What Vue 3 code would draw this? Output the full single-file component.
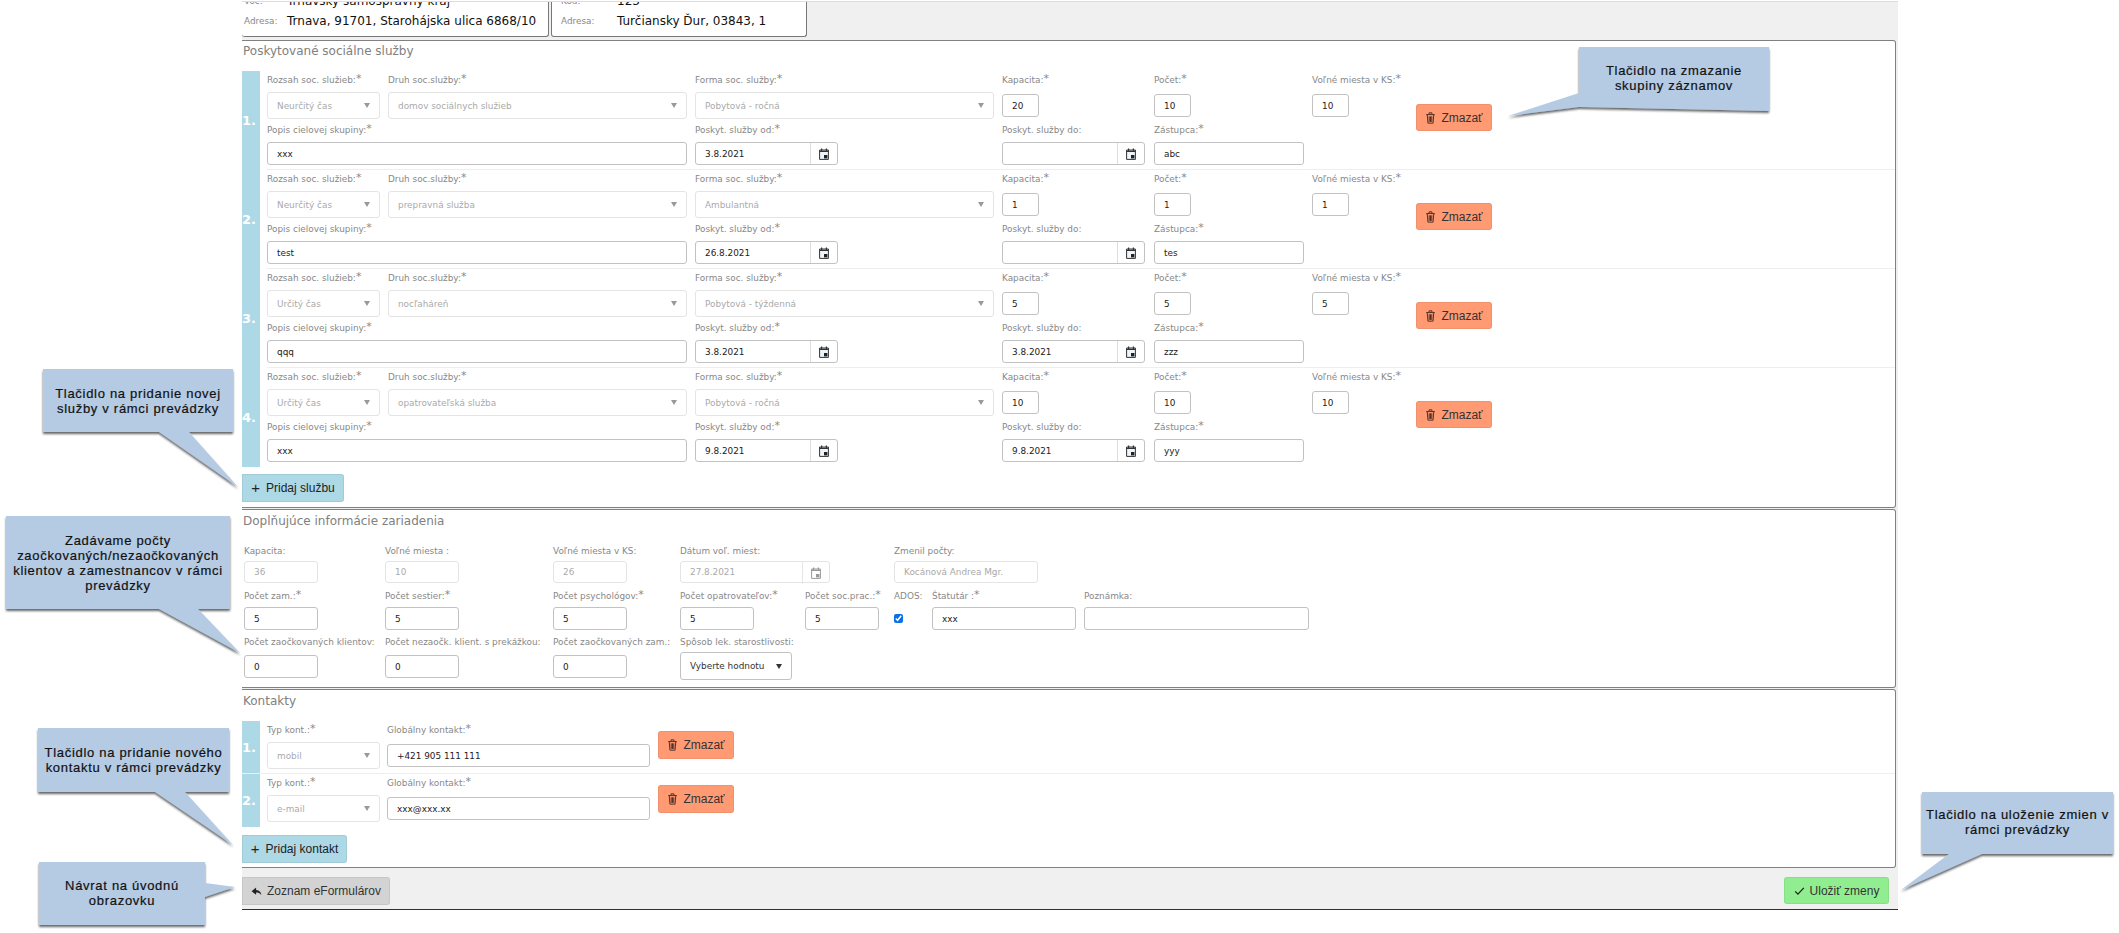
<script setup>
const services = [
  { n: '1.', rozsah: 'Neurčitý čas', druh: 'domov sociálnych služieb', forma: 'Pobytová - ročná', kap: '20', poc: '10', vol: '10', popis: 'xxx', od: '3.8.2021', do: '', zast: 'abc' },
  { n: '2.', rozsah: 'Neurčitý čas', druh: 'prepravná služba', forma: 'Ambulantná', kap: '1', poc: '1', vol: '1', popis: 'test', od: '26.8.2021', do: '', zast: 'tes' },
  { n: '3.', rozsah: 'Určitý čas', druh: 'nocľaháreň', forma: 'Pobytová - týždenná', kap: '5', poc: '5', vol: '5', popis: 'qqq', od: '3.8.2021', do: '3.8.2021', zast: 'zzz' },
  { n: '4.', rozsah: 'Určitý čas', druh: 'opatrovateľská služba', forma: 'Pobytová - ročná', kap: '10', poc: '10', vol: '10', popis: 'xxx', od: '9.8.2021', do: '9.8.2021', zast: 'yyy' }
]
const contacts = [
  { n: '1.', typ: 'mobil', val: '+421 905 111 111' },
  { n: '2.', typ: 'e-mail', val: 'xxx@xxx.xx' }
]
const callouts = [
  { id: 'a', x: 1579, y: 47, w: 190, h: 64, pts: '1579,47 1769,47 1769,111 1579,107 1508,116 1579,93', lines: ['Tlačidlo na zmazanie', 'skupiny záznamov'], top: 16 },
  { id: 'b', x: 43, y: 369, w: 190, h: 63, pts: '43,369 233,369 233,432 189,432 238,487 159,432 43,432', lines: ['Tlačidlo na pridanie novej', 'služby v rámci prevádzky'], top: 17 },
  { id: 'c', x: 6, y: 516, w: 224, h: 93, pts: '6,516 230,516 230,609 198,609 240,653 159,609 6,609', lines: ['Zadávame počty', 'zaočkovaných/nezaočkovaných', 'klientov a zamestnancov v rámci', 'prevádzky'], top: 17 },
  { id: 'd', x: 38, y: 728, w: 191, h: 64, pts: '38,728 229,728 229,792 185,792 233,845 155,792 38,792', lines: ['Tlačidlo na pridanie nového', 'kontaktu v rámci prevádzky'], top: 17 },
  { id: 'e', x: 39, y: 862, w: 166, h: 63, pts: '39,862 205,862 205,883 235,887 205,897 205,925 39,925', lines: ['Návrat na úvodnú', 'obrazovku'], top: 16 },
  { id: 'f', x: 1922, y: 792, w: 191, h: 62, pts: '1922,792 2113,792 2113,854 1982,854 1901,890 1949,854 1922,854', lines: ['Tlačidlo na uloženie zmien v', 'rámci prevádzky'], top: 15 }
]
</script>

<template>
  <div class="page">
    <main class="main">
      <header class="top">
        <div class="card card1">
          <div class="crow"><span class="clabel">Voč:</span><span class="cval">Trnavský samosprávny kraj</span></div>
          <div class="crow"><span class="clabel">Adresa:</span><span class="cval">Trnava, 91701, Starohájska ulica 6868/10</span></div>
        </div>
        <div class="card card2">
          <div class="crow"><span class="clabel">Kód:</span><span class="cval">123</span></div>
          <div class="crow"><span class="clabel">Adresa:</span><span class="cval">Turčiansky Ďur, 03843, 1</span></div>
        </div>
      </header>

      <section class="box box1">
        <h2 class="title head1">Poskytované sociálne služby</h2>
        <div v-for="s in services" :key="s.n" class="srow">
          <div class="strip">{{ s.n }}</div>
          <div class="sgrid">
            <div class="f"><label class="l1">Rozsah soc. služieb:<i>*</i></label><div class="sel"><span>{{ s.rozsah }}</span><b class="caret"></b></div></div>
            <div class="f"><label class="l1">Druh soc.služby:<i>*</i></label><div class="sel"><span>{{ s.druh }}</span><b class="caret"></b></div></div>
            <div class="f"><label class="l1">Forma soc. služby:<i>*</i></label><div class="sel"><span>{{ s.forma }}</span><b class="caret"></b></div></div>
            <div class="f"><label class="l1">Kapacita:<i>*</i></label><div class="inp narrow up">{{ s.kap }}</div></div>
            <div class="f"><label class="l1">Počet:<i>*</i></label><div class="inp narrow up">{{ s.poc }}</div></div>
            <div class="f"><label class="l1">Voľné miesta v KS:<i>*</i></label><div class="inp narrow up">{{ s.vol }}</div></div>
            <button class="btn del delsvc" type="button">
              <svg class="ic" viewBox="0 0 12 14"><path d="M4.3 2.5V1h3.4v1.5M1 3h10M2.2 3.2 3 13h6l.8-9.8M4.5 5v6.6M6 5v6.6M7.5 5v6.6" fill="none" stroke="#4a2c22" stroke-width="1.1"/></svg>Zmazať
            </button>
            <div class="f span2"><label class="l2">Popis cielovej skupiny:<i>*</i></label><div class="inp">{{ s.popis }}</div></div>
            <div class="f"><label class="l2">Poskyt. služby od:<i>*</i></label>
              <div class="inp date"><span class="dv">{{ s.od }}</span><span class="addon"><svg class="cal" viewBox="0 0 10 12"><path d="M.6 2h8.8v9.4H.6z" fill="#eef5fa" stroke="#333" stroke-width="1"/><path d="M.6 3.4h8.8M2.6 .4v2.6M7.4 .4v2.6" fill="none" stroke="#333" stroke-width="1.2"/><rect x="5" y="7" width="3.4" height="3.4" fill="#222"/></svg></span></div>
            </div>
            <div class="f"><label class="l2">Poskyt. služby do:</label>
              <div class="inp date"><span class="dv">{{ s.do }}</span><span class="addon"><svg class="cal" viewBox="0 0 10 12"><path d="M.6 2h8.8v9.4H.6z" fill="#eef5fa" stroke="#333" stroke-width="1"/><path d="M.6 3.4h8.8M2.6 .4v2.6M7.4 .4v2.6" fill="none" stroke="#333" stroke-width="1.2"/><rect x="5" y="7" width="3.4" height="3.4" fill="#222"/></svg></span></div>
            </div>
            <div class="f"><label class="l2">Zástupca:<i>*</i></label><div class="inp zast">{{ s.zast }}</div></div>
          </div>
        </div>
        <button class="btn add addsvc" type="button"><span class="plus">+</span>Pridaj službu</button>
      </section>

      <section class="box box2">
        <h2 class="title head2">Doplňujúce informácie zariadenia</h2>
        <div class="igrid">
          <div class="g"><label class="g1">Kapacita:</label><div class="inp off w74">36</div></div>
          <div class="g"><label class="g1">Voľné miesta :</label><div class="inp off w74">10</div></div>
          <div class="g"><label class="g1">Voľné miesta v KS:</label><div class="inp off w74">26</div></div>
          <div class="g s2"><label class="g1">Dátum voľ. miest:</label>
            <div class="inp off date w150"><span class="dv">27.8.2021</span><span class="addon off"><svg class="cal" viewBox="0 0 10 12"><path d="M.6 2h8.8v9.4H.6z" fill="#fff" stroke="#999" stroke-width="1"/><path d="M.6 3.4h8.8M2.6 .4v2.6M7.4 .4v2.6" fill="none" stroke="#999" stroke-width="1.2"/><rect x="5" y="7" width="3.4" height="3.4" fill="#999"/></svg></span></div>
          </div>
          <div class="g s3"><label class="g1">Zmenil počty:</label><div class="inp off w144">Kocánová Andrea Mgr.</div></div>

          <div class="g"><label class="g2">Počet zam.:<i>*</i></label><div class="inp w74">5</div></div>
          <div class="g"><label class="g2">Počet sestier:<i>*</i></label><div class="inp w74">5</div></div>
          <div class="g"><label class="g2">Počet psychológov:<i>*</i></label><div class="inp w74">5</div></div>
          <div class="g"><label class="g2">Počet opatrovateľov:<i>*</i></label><div class="inp w74">5</div></div>
          <div class="g"><label class="g2">Počet soc.prac.:<i>*</i></label><div class="inp w74">5</div></div>
          <div class="g"><label class="g2">ADOS:</label><input class="chk" type="checkbox" checked /></div>
          <div class="g"><label class="g2">Štatutár :<i>*</i></label><div class="inp w144">xxx</div></div>
          <div class="g"><label class="g2">Poznámka:</label><div class="inp w224"></div></div>

          <div class="g"><label class="g3">Počet zaočkovaných klientov:</label><div class="inp w74 d3">0</div></div>
          <div class="g"><label class="g3">Počet nezaočk. klient. s prekážkou:</label><div class="inp w74 d3">0</div></div>
          <div class="g"><label class="g3">Počet zaočkovaných zam.:</label><div class="inp w74 d3">0</div></div>
          <div class="g s2"><label class="g3">Spôsob lek. starostlivosti:</label><div class="sel dark w112"><span>Vyberte hodnotu</span><b class="caret"></b></div></div>
        </div>
      </section>

      <section class="box box3">
        <h2 class="title head3">Kontakty</h2>
        <div v-for="c in contacts" :key="c.n" class="crw">
          <div class="strip">{{ c.n }}</div>
          <div class="f cf1"><label class="l1">Typ kont.:<i>*</i></label><div class="sel"><span>{{ c.typ }}</span><b class="caret"></b></div></div>
          <div class="f cf2"><label class="l1">Globálny kontakt:<i>*</i></label><div class="inp up">{{ c.val }}</div></div>
          <button class="btn del delc" type="button">
            <svg class="ic" viewBox="0 0 12 14"><path d="M4.3 2.5V1h3.4v1.5M1 3h10M2.2 3.2 3 13h6l.8-9.8M4.5 5v6.6M6 5v6.6M7.5 5v6.6" fill="none" stroke="#4a2c22" stroke-width="1.1"/></svg>Zmazať
          </button>
        </div>
        <button class="btn add addc" type="button"><span class="plus">+</span>Pridaj kontakt</button>
      </section>

      <footer class="foot">
        <button class="btn back" type="button">
          <svg class="ic" viewBox="0 0 14 12"><path d="M6.5 1.5 .8 6.4l5.7 4.4V8c2.6 0 4.6.6 6.7 3-.4-3.6-2.7-6-6.7-6.3z" fill="#222"/></svg>Zoznam eFormulárov
        </button>
        <button class="btn save" type="button">
          <svg class="ic" viewBox="0 0 14 12"><path d="M1.5 6.5 5 10l7.5-8" fill="none" stroke="#222" stroke-width="1.7"/></svg>Uložiť zmeny
        </button>
      </footer>
    </main>

    <svg class="shapes" width="2119" height="933" viewBox="0 0 2119 933">
      <defs>
        <filter id="sh" x="-10%" y="-10%" width="120%" height="125%">
          <feDropShadow dx="0" dy="2" stdDeviation="1.2" flood-color="#333" flood-opacity=".75"/>
        </filter>
      </defs>
      <polygon v-for="c in callouts" :key="c.id" :points="c.pts" fill="#b5cae3" filter="url(#sh)"/>
    </svg>
    <div
      v-for="c in callouts"
      :key="'t' + c.id"
      class="note"
      :style="{ left: c.x + 'px', top: c.y + 'px', width: c.w + 'px', paddingTop: c.top + 'px' }"
    >
      <div v-for="t in c.lines" :key="t">{{ t }}</div>
    </div>
  </div>
</template>

<style>
html, body { margin: 0; background: #fff; }
</style>

<style scoped>
.page { position: relative; width: 2119px; height: 933px; overflow: hidden; background: #fff; font-family: "DejaVu Sans", sans-serif; }
.main { width: 1656px; margin-left: 242px; background: #f0f0f0; border-bottom: 1px solid #2b2f36; }
.top { display: flex; gap: 2px; height: 39px; margin-top: 1px; border-top: 1px solid #ddd; overflow: hidden; background: #f0f0f0; box-sizing: border-box; }
.card { background: #fff; height: 35px; border: 1px solid #777; border-top: 0; border-radius: 0 0 3px 3px; box-sizing: border-box; overflow: hidden; }
.card1 { width: 307px; border-left: 0; padding-left: 2px; }
.card2 { width: 256px; padding-left: 9px; }
.crow { display: flex; align-items: center; height: 19px; margin-top: -11px; white-space: nowrap; }
.crow + .crow { margin-top: 0; height: 22px; }
.clabel { width: 43px; font-size: 8.9px; color: #888; }
.card2 .clabel { width: 56px; }
.cval { font: 12px/16px "DejaVu Sans", sans-serif; color: #111; }

.box { background: #fff; border: 1px solid #808080; border-left: 0; border-radius: 0 3px 3px 0; width: 1654px; box-sizing: border-box; }
.title { margin: 0; padding-left: 1px; font: 400 12px/14px "DejaVu Sans", sans-serif; color: #808080; }
.box1 { height: 468px; }
.head1 { height: 30px; padding-top: 3px; box-sizing: border-box; }
.strip { width: 18px; flex: none; background: #add8e6; color: #fff; font-weight: 700; font-size: 13px; display: flex; align-items: center; }
.srow { display: flex; height: 99px; }
.sgrid { flex: 1; margin-left: 7px; display: grid; grid-template-columns: 121px 307px 307px 152px 158px 104px 1fr; grid-template-rows: 48px 46px 5px; border-bottom: 1px solid #eee; box-sizing: border-box; }
.srow:last-of-type .sgrid { border-bottom: 0; }
.f { display: flex; flex-direction: column; min-width: 0; }
label { display: block; font-size: 8.9px; color: #888; white-space: nowrap; box-sizing: border-box; line-height: 12px; }
label i { font-style: normal; font-size: 11px; line-height: 8px; position: relative; top: -1px; }
.l1 { height: 21px; padding-top: 3px; }
.l2 { height: 23px; padding-top: 5px; }
.sel { height: 27px; border: 1px solid #e4e4e4; border-radius: 3px; display: flex; align-items: center; justify-content: space-between; padding: 0 9px; box-sizing: border-box; font-size: 8.9px; color: #aaa; background: #fff; width: 113px; }
.sgrid .f:nth-child(2) .sel, .sgrid .f:nth-child(3) .sel { width: 299px; }
.caret { width: 0; height: 0; border-left: 3px solid transparent; border-right: 3px solid transparent; border-top: 5px solid #999; }
.inp { height: 23px; border: 1px solid #c2c2c2; border-radius: 3px; display: flex; align-items: center; padding: 0 9px; box-sizing: border-box; font-size: 8.9px; color: #222; background: #fff; width: 100%; }
.narrow { width: 37px; }
.up { margin-top: 2px; }
.span2 { grid-column: span 2; }
.span2 .inp { width: 420px; }
.date { width: 143px; padding: 0 0 0 9px; justify-content: space-between; }
.dv { flex: 1; }
.addon { width: 26px; align-self: stretch; border-left: 1px solid #ddd; display: flex; align-items: center; justify-content: center; flex: none; }
.addon.off { border-left-color: #e6e6e6; }
.cal { width: 10px; height: 12px; }
.zast { width: 150px; }

.btn { display: inline-flex; align-items: center; justify-content: center; height: 28px; padding: 0; border: 1px solid rgba(0,0,0,.06); border-radius: 3px; font: 12px "Liberation Sans", sans-serif; color: #333; box-sizing: border-box; white-space: nowrap; }
.ic { width: 11px; height: 12px; margin-right: 5px; }
.del { background: #ff9a73; width: 76px; }
.delsvc { grid-column: 7; grid-row: 1 / span 2; margin-top: 33px; height: 27px; justify-self: start; }
.add { background: #add8e6; color: #222; border-radius: 0 3px 3px 0; }
.plus { font-size: 15px; margin-right: 6px; line-height: 12px; }
.addsvc { width: 102px; margin-top: 7px; }
.addc { width: 105px; margin-top: 8px; }

.box2 { height: 179px; margin-top: 1px; }
.head2 { height: 32px; padding-top: 4px; box-sizing: border-box; }
.igrid { margin-left: 2px; display: grid; grid-template-columns: 141px 168px 127px 125px 89px 38px 152px 1fr; grid-template-rows: 41px 46px 51px; }
.g { min-width: 0; }
.s2 { grid-column: span 2; }
.s3 { grid-column: span 3; }
.g1 { height: 19px; padding-top: 3px; }
.g2 { height: 24px; padding-top: 7px; }
.g3 { height: 23px; padding-top: 7px; }
.d3 { margin-top: 3px; }
.w74 { width: 74px; }
.w144 { width: 144px; }
.w150 { width: 150px; }
.w224 { width: 224.5px; }
.w112 { width: 112px; height: 28px; }
.off { border-color: #e4e4e4; color: #aaa; height: 22px; }
.dark { border-color: #c2c2c2; color: #333; }
.dark .caret { border-top-color: #333; }
.chk { display: block; width: 9px; height: 9px; margin: 7px 0 0; accent-color: #0b6fe8; }

.box3 { height: 179px; margin-top: 1px; }
.head3 { height: 31px; padding-top: 4px; box-sizing: border-box; }
.crw { display: flex; height: 53px; border-bottom: 1px solid #eee; box-sizing: border-box; }
.crw:nth-of-type(2) { border-bottom: 0; }
.cf1 { margin-left: 7px; width: 120px; }
.cf2 { width: 271px; }
.cf2 .inp { margin-top: 2px; width: 263px; }
.delc { height: 28px; margin-top: 10px; }
.crw:nth-of-type(2) .delc { margin-top: 11px; }

.foot { height: 41px; padding: 9px 9px 0 0; display: flex; justify-content: space-between; align-items: flex-start; box-sizing: border-box; }
.back { width: 148px; background: #d3d3d3; border-radius: 0 3px 3px 0; }
.save { width: 105px; height: 27px; background: #90ee90; }

.shapes { position: absolute; left: 0; top: 0; pointer-events: none; }
.note { position: absolute; box-sizing: border-box; text-align: center; font: 400 13px/15px "Liberation Sans", sans-serif; letter-spacing: .7px; color: #111; -webkit-text-stroke: .2px #111; white-space: nowrap; }
</style>
